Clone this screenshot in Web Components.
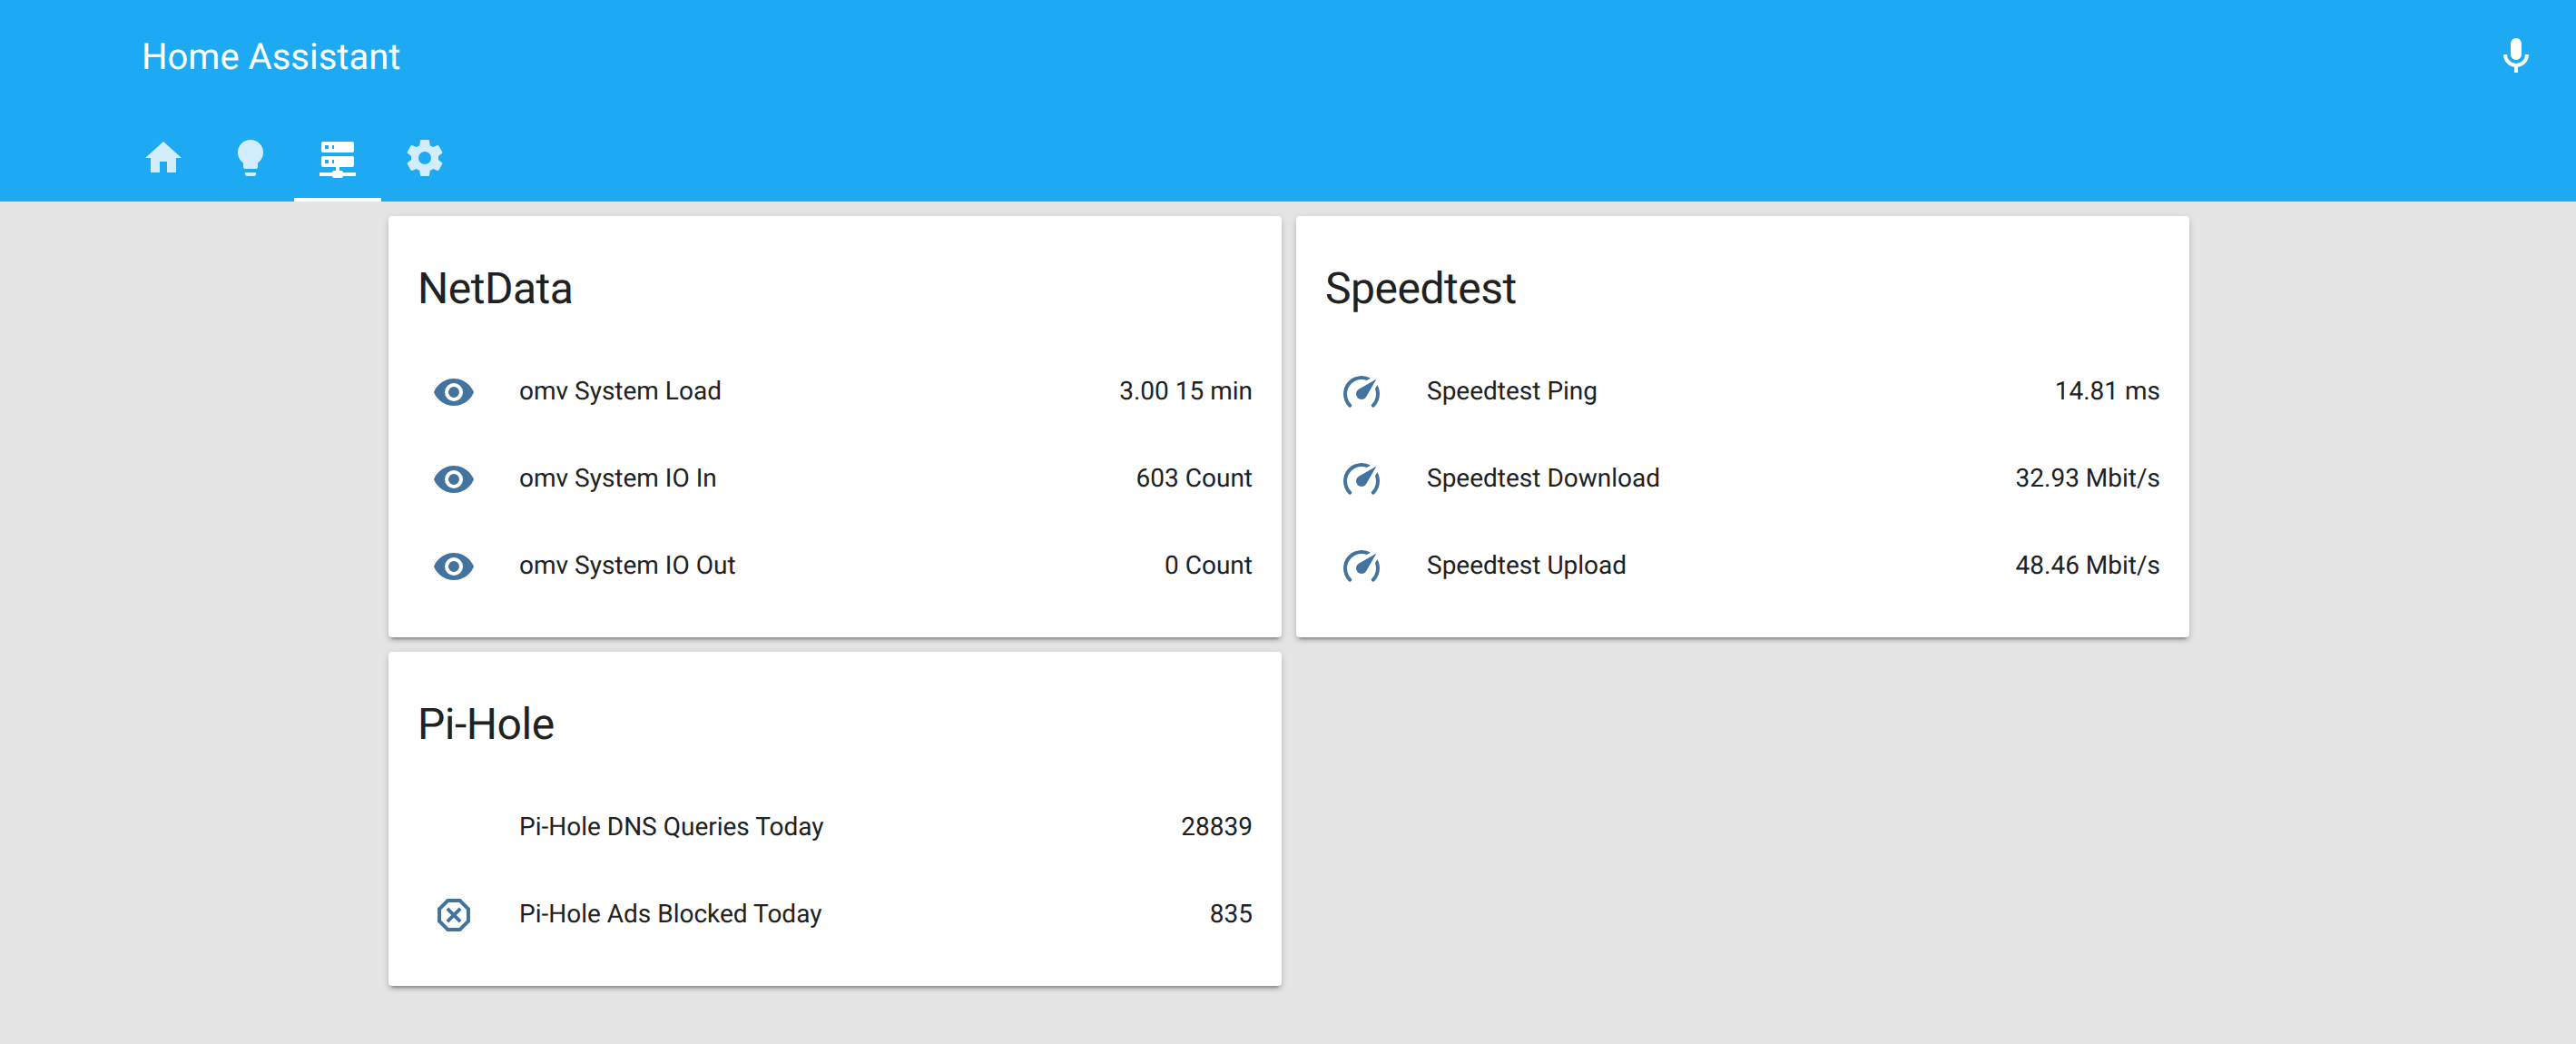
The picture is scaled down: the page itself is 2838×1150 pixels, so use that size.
<!DOCTYPE html>
<html>
<head>
<meta charset="utf-8">
<title>Home Assistant</title>
<style>
    html, body {
        margin: 0;
        height: 100%;
    }
    body {
        background: #e5e5e5;
        font-family: Roboto, "Liberation Sans", sans-serif;
        color: #212121;
        text-rendering: geometricPrecision;
    }
</style>
</head>
<body>
<ha-app>
    <ha-header slot="header" title="Home Assistant">
        <ha-tab icon="home"></ha-tab>
        <ha-tab icon="lightbulb"></ha-tab>
        <ha-tab icon="server" active></ha-tab>
        <ha-tab icon="settings"></ha-tab>
    </ha-header>
    <ha-card name="NetData" style="grid-column: 1; grid-row: 1">
        <ha-row icon="eye" value="3.00 15 min">omv System Load</ha-row>
        <ha-row icon="eye" value="603 Count">omv System IO In</ha-row>
        <ha-row icon="eye" value="0 Count">omv System IO Out</ha-row>
    </ha-card>
    <ha-card name="Speedtest" style="grid-column: 2; grid-row: 1">
        <ha-row icon="speedometer" value="14.81 ms">Speedtest Ping</ha-row>
        <ha-row icon="speedometer" value="32.93 Mbit/s">Speedtest Download</ha-row>
        <ha-row icon="speedometer" value="48.46 Mbit/s">Speedtest Upload</ha-row>
    </ha-card>
    <ha-card name="Pi-Hole" style="grid-column: 1; grid-row: 2">
        <ha-row value="28839">Pi-Hole DNS Queries Today</ha-row>
        <ha-row icon="octagon" value="835">Pi-Hole Ads Blocked Today</ha-row>
    </ha-card>
</ha-app>

<script>
    const ICONS = {
        home: "M10,20V14H14V20H19V12H22L12,3L2,12H5V20H10Z",
        lightbulb: "M12,2A7,7 0 0,0 5,9C5,11.38 6.19,13.47 8,14.74V17A1,1 0 0,0 9,18H15A1,1 0 0,0 16,17V14.74C17.81,13.47 19,11.38 19,9A7,7 0 0,0 12,2M9,21A1,1 0 0,0 10,22H14A1,1 0 0,0 15,21V20H9V21Z",
        server: "M13,19H14A1,1 0 0,1 15,20H22V22H15A1,1 0 0,1 14,23H10A1,1 0 0,1 9,22H2V20H9A1,1 0 0,1 10,19H11V17H4A1,1 0 0,1 3,16V12A1,1 0 0,1 4,11H20A1,1 0 0,1 21,12V16A1,1 0 0,1 20,17H13V19M4,3H20A1,1 0 0,1 21,4V8A1,1 0 0,1 20,9H4A1,1 0 0,1 3,8V4A1,1 0 0,1 4,3M9,7H10V5H9V7M9,15H10V13H9V15M5,5V7H7V5H5M5,13V15H7V13H5Z",
        settings: "M12,15.5A3.5,3.5 0 0,1 8.5,12A3.5,3.5 0 0,1 12,8.5A3.5,3.5 0 0,1 15.5,12A3.5,3.5 0 0,1 12,15.5M19.43,12.97C19.47,12.65 19.5,12.33 19.5,12C19.5,11.67 19.47,11.34 19.43,11L21.54,9.37C21.73,9.22 21.78,8.95 21.66,8.73L19.66,5.27C19.54,5.05 19.27,4.96 19.05,5.05L16.56,6.05C16.04,5.66 15.5,5.32 14.87,5.07L14.5,2.42C14.46,2.18 14.25,2 14,2H10C9.75,2 9.54,2.18 9.5,2.42L9.13,5.07C8.5,5.32 7.96,5.66 7.44,6.05L4.95,5.05C4.73,4.96 4.46,5.05 4.34,5.27L2.34,8.73C2.21,8.95 2.27,9.22 2.46,9.37L4.57,11C4.53,11.34 4.5,11.67 4.5,12C4.5,12.33 4.53,12.65 4.57,12.97L2.46,14.63C2.27,14.78 2.21,15.05 2.34,15.27L4.34,18.73C4.46,18.95 4.73,19.03 4.95,18.95L7.44,17.94C7.96,18.34 8.5,18.68 9.13,18.93L9.5,21.58C9.54,21.82 9.75,22 10,22H14C14.25,22 14.46,21.82 14.5,21.58L14.87,18.93C15.5,18.67 16.04,18.34 16.56,17.94L19.05,18.95C19.27,19.03 19.54,18.95 19.66,18.73L21.66,15.27C21.78,15.05 21.73,14.78 21.54,14.63L19.43,12.97Z",
        microphone: "M12,2A3,3 0 0,1 15,5V11A3,3 0 0,1 12,14A3,3 0 0,1 9,11V5A3,3 0 0,1 12,2M19,11C19,14.53 16.39,17.44 13,17.93V21H11V17.93C7.61,17.44 5,14.53 5,11H7A5,5 0 0,0 12,16A5,5 0 0,0 17,11H19Z",
        eye: "M12,9A3,3 0 0,0 9,12A3,3 0 0,0 12,15A3,3 0 0,0 15,12A3,3 0 0,0 12,9M12,17A5,5 0 0,1 7,12A5,5 0 0,1 12,7A5,5 0 0,1 17,12A5,5 0 0,1 12,17M12,4.5C7,4.5 2.73,7.61 1,12C2.73,16.39 7,19.5 12,19.5C17,19.5 21.27,16.39 23,12C21.27,7.61 17,4.5 12,4.5Z",
        speedometer: "M12,16A3,3 0 0,1 9,13C9,11.88 9.61,10.9 10.5,10.39L20.21,4.77L14.68,14.35C14.18,15.33 13.17,16 12,16M12,3C13.81,3 15.5,3.5 16.97,4.32L14.87,5.53C14,5.19 13,5 12,5A8,8 0 0,0 4,13C4,15.21 4.89,17.21 6.34,18.65H6.35C6.74,19.04 6.74,19.67 6.35,20.06C5.96,20.45 5.32,20.45 4.93,20.07V20.07C3.12,18.26 2,15.76 2,13A10,10 0 0,1 12,3M22,13C22,15.76 20.88,18.26 19.07,20.07V20.07C18.68,20.45 18.05,20.45 17.66,20.06C17.27,19.67 17.27,19.04 17.66,18.65V18.65C19.11,17.2 20,15.21 20,13C20,12 19.81,11 19.46,10.1L20.68,8C21.5,9.5 22,11.18 22,13Z",
        octagon: "M8.27,3L3,8.27V15.73L8.27,21H15.73C17.5,19.24 21,15.73 21,15.73V8.27L15.73,3M9.1,5H14.9L19,9.1V14.9L14.9,19H9.1L5,14.9V9.1M9.12,7.71L7.71,9.12L10.59,12L7.71,14.88L9.12,16.29L12,13.41L14.88,16.29L16.29,14.88L13.41,12L16.29,9.12L14.88,7.71L12,10.59Z"
    };

    class HaIcon extends HTMLElement {
        constructor() {
            super();
            this.root = this.attachShadow({ mode: "open" });
        }

        connectedCallback() {
            const path = ICONS[this.getAttribute("name")] || "";
            this.root.innerHTML = `
                <style>
                    :host {
                        display: block;
                        width: 48px;
                        height: 48px;
                    }
                    svg {
                        display: block;
                        width: 100%;
                        height: 100%;
                        fill: currentColor;
                    }
                </style>
                <svg viewBox="0 0 24 24"><path d="${path}"/></svg>
            `;
        }
    }

    class HaTab extends HTMLElement {
        constructor() {
            super();
            this.root = this.attachShadow({ mode: "open" });
        }

        connectedCallback() {
            this.root.innerHTML = `
                <style>
                    :host {
                        display: flex;
                        align-items: center;
                        justify-content: center;
                        box-sizing: border-box;
                        width: 96px;
                        height: 96px;
                        color: rgba(255, 255, 255, 0.8);
                        border-bottom: 4px solid transparent;
                        padding-top: 4px;
                    }
                    :host([active]) {
                        color: #fff;
                        border-bottom-color: #fff;
                    }
                </style>
                <ha-icon name="${this.getAttribute("icon")}"></ha-icon>
            `;
        }
    }

    class HaHeader extends HTMLElement {
        constructor() {
            super();
            this.root = this.attachShadow({ mode: "open" });
        }

        connectedCallback() {
            this.root.innerHTML = `
                <style>
                    :host {
                        display: block;
                        background: #1eaaf2;
                        color: #fff;
                    }
                    .toolbar {
                        display: flex;
                        align-items: center;
                        justify-content: space-between;
                        height: 126px;
                        padding: 0 42px 2px 156px;
                        box-sizing: border-box;
                    }
                    .title {
                        font-size: 40px;
                        font-weight: 400;
                    }
                    .tabs {
                        display: flex;
                        padding-left: 132px;
                    }
                </style>
                <div class="toolbar">
                    <div class="title">${this.getAttribute("title")}</div>
                    <ha-icon name="microphone"></ha-icon>
                </div>
                <div class="tabs"><slot></slot></div>
            `;
        }
    }

    class HaCard extends HTMLElement {
        constructor() {
            super();
            this.root = this.attachShadow({ mode: "open" });
        }

        connectedCallback() {
            this.root.innerHTML = `
                <style>
                    :host {
                        display: block;
                        background: #fff;
                        border-radius: 4px;
                        box-shadow: 0 4px 4px 0 rgba(0, 0, 0, 0.14),
                            0 2px 10px 0 rgba(0, 0, 0, 0.12),
                            0 6px 2px -4px rgba(0, 0, 0, 0.2);
                        padding-bottom: 32px;
                    }
                    .name {
                        box-sizing: border-box;
                        height: 144px;
                        padding: 48px 32px 0;
                        font-size: 48px;
                        line-height: 64px;
                        letter-spacing: -0.01em;
                    }
                </style>
                <div class="name">${this.getAttribute("name")}</div>
                <slot></slot>
            `;
        }
    }

    class HaRow extends HTMLElement {
        constructor() {
            super();
            this.root = this.attachShadow({ mode: "open" });
        }

        connectedCallback() {
            const icon = this.getAttribute("icon");
            this.root.innerHTML = `
                <style>
                    :host {
                        display: flex;
                        align-items: center;
                        height: 96px;
                        padding: 0 32px;
                        font-size: 28px;
                    }
                    .badge {
                        display: flex;
                        justify-content: center;
                        flex: none;
                        width: 80px;
                        margin-right: 32px;
                        padding-top: 4px;
                        color: #44739e;
                    }
                    .label {
                        flex: 1;
                    }
                </style>
                <div class="badge">${icon ? `<ha-icon name="${icon}"></ha-icon>` : ""}</div>
                <div class="label"><slot></slot></div>
                <div class="value">${this.getAttribute("value")}</div>
            `;
        }
    }

    class HaApp extends HTMLElement {
        constructor() {
            super();
            this.root = this.attachShadow({ mode: "open" });
        }

        connectedCallback() {
            this.root.innerHTML = `
                <style>
                    :host {
                        display: block;
                    }
                    .grid {
                        display: grid;
                        grid-template-columns: 984px 984px;
                        gap: 16px;
                        padding: 16px 0 0 428px;
                        align-items: start;
                    }
                </style>
                <slot name="header"></slot>
                <div class="grid"><slot></slot></div>
            `;
        }
    }

    window.customElements.define("ha-icon", HaIcon);
    window.customElements.define("ha-tab", HaTab);
    window.customElements.define("ha-header", HaHeader);
    window.customElements.define("ha-card", HaCard);
    window.customElements.define("ha-row", HaRow);
    window.customElements.define("ha-app", HaApp);
</script>
</body>
</html>
